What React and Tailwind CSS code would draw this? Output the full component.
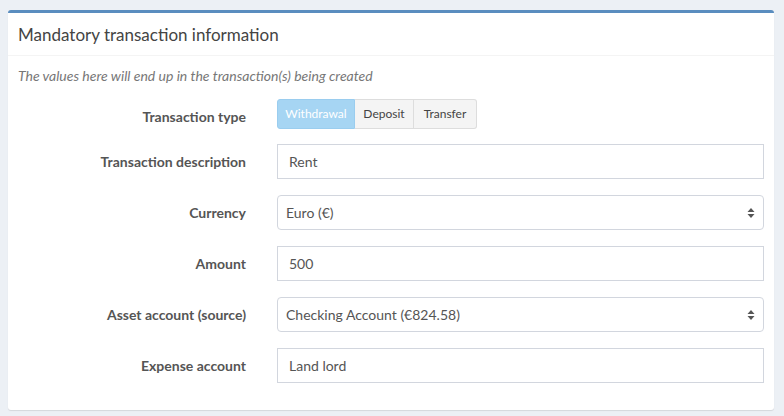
import React from "react";

const font = { fontFamily: "Lato, 'Liberation Sans', sans-serif" };

const Arrows = () => (
  <svg width="8" height="12" viewBox="0 0 8 12" className="absolute right-[8px] top-1/2 -translate-y-1/2">
    <path d="M4 1 L7.5 5 L0.5 5 Z" fill="#555" />
    <path d="M4 11 L7.5 7 L0.5 7 Z" fill="#555" />
  </svg>
);

const Row = ({ label, children, last }) => (
  <div className={`flex ${last ? "" : "mb-[16px]"}`}>
    <label className="w-[228px] shrink-0 text-right pt-[8px] leading-[20px] text-[14px] font-bold text-[#555]">
      {label}
    </label>
    <div className="ml-[31px] flex-1">{children}</div>
  </div>
);

const TextInput = ({ value }) => (
  <div className="h-[35px] border border-[#d2d6de] px-[11px] flex items-center text-[14px] text-[#555]">
    {value}
  </div>
);

const SelectInput = ({ value }) => (
  <div className="relative h-[35px] border border-[#d2d6de] rounded-[4px] px-[8px] flex items-center text-[14px] text-[#555]">
    {value}
    <Arrows />
  </div>
);

export default function App() {
  return (
    <div style={font} className="w-[784px] h-[416px] bg-[#ecf0f5] pt-[10px] px-[8px] overflow-hidden">
      <div className="w-[766px] bg-white border-t-[3px] border-[#5a8dbf] rounded-[3px] shadow-[0_1px_1px_rgba(0,0,0,0.1)]">
        <div className="h-[43px] border-b border-[#f4f4f4] px-[10px] flex items-center">
          <h3 className="text-[17px] text-[#444] leading-none">Mandatory transaction information</h3>
        </div>
        <div className="px-[10px] pt-[10px] pb-[27px]">
          <p className="italic text-[14px] leading-[20px] text-[#777] mb-[13px]">
            The values here will end up in the transaction(s) being created
          </p>
          <div className="flex mb-[15px]">
            <label className="w-[228px] shrink-0 text-right pt-[8px] leading-[20px] text-[14px] font-bold text-[#555]">
              Transaction type
            </label>
            <div className="ml-[31px] flex h-[30px] text-[12px]">
              <div className="w-[78px] flex items-center justify-center bg-[#a6d5f3] text-white rounded-l-[3px] border border-[#9acdef]">
                Withdrawal
              </div>
              <div className="w-[59px] flex items-center justify-center bg-[#f4f4f4] text-[#444] border-y border-r border-[#ddd]">
                Deposit
              </div>
              <div className="w-[63px] flex items-center justify-center bg-[#f4f4f4] text-[#444] border-y border-r border-[#ddd] rounded-r-[3px]">
                Transfer
              </div>
            </div>
          </div>
          <Row label="Transaction description">
            <TextInput value="Rent" />
          </Row>
          <Row label="Currency">
            <SelectInput value="Euro (€)" />
          </Row>
          <Row label="Amount">
            <TextInput value="500" />
          </Row>
          <Row label="Asset account (source)">
            <SelectInput value="Checking Account (€824.58)" />
          </Row>
          <Row label="Expense account" last>
            <TextInput value="Land lord" />
          </Row>
        </div>
      </div>
    </div>
  );
}
